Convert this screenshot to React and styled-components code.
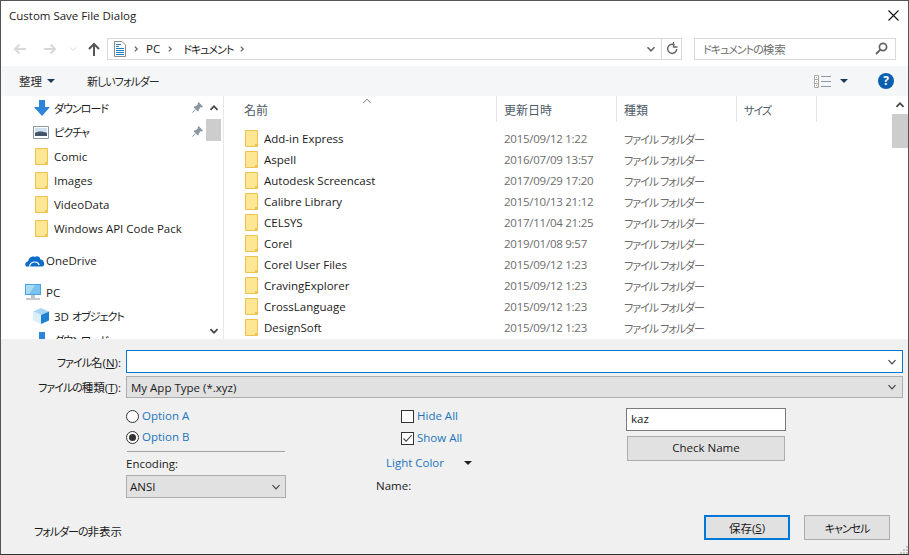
import React from "react";
import styled, { createGlobalStyle } from "styled-components";

const Global = createGlobalStyle`
  html, body { margin: 0; padding: 0; background: #fff; }
  body {
    font-family: "Open Sans", "Noto Sans CJK JP", sans-serif;
    font-size: 11.5px;
    font-feature-settings: "palt";
    color: #111;
  }
  * { box-sizing: border-box; }
`;

const Window = styled.div`
  width: 909px; height: 555px; display: flex; flex-direction: column;
  border: 1px solid #555; border-bottom-color: #333; background: #fff; overflow: hidden;
  position: relative;
`;
const Kana = styled.span`font-size: 11px; letter-spacing: -1px;`;
const TitleBar = styled.div`
  height: 30px; flex: none; display: flex; align-items: center; justify-content: space-between;
  padding: 0 9px 2px 8px; color: #1a1a1a;
`;
const NavBar = styled.div`
  height: 35px; flex: none; display: flex; align-items: center; padding: 0 0 0 12px;
`;
const NavIcon = styled.span`
  display: flex; align-items: center; justify-content: center; width: ${p => p.$w}px; flex: none;
`;
const AddressBox = styled.div`
  width: 575px; height: 22px; margin-left: 0; border: 1px solid #d9d9d9; display: flex; align-items: center;
  background: #fff; color: #222;
`;
const Crumb = styled.span`margin-left: ${p => p.$ml || 0}px; white-space: nowrap; display: flex; align-items: center;`;
const AddressFill = styled.span`flex: 1;`;
const AddressBtn = styled.span`
  width: 20px; height: 100%; border-left: ${p => p.$sep ? "1px solid #d9d9d9" : "none"};
  display: flex; align-items: center; justify-content: center; flex: none;
`;
const SearchBox = styled.div`
  width: 202px; height: 22px; margin-left: 12px; border: 1px solid #d9d9d9; display: flex;
  align-items: center; justify-content: space-between; padding: 0 7px 0 8px; color: #6d6d6d;
`;
const ToolBar = styled.div`
  height: 30px; flex: none; background: #f5f6f7; display: flex; align-items: center; padding: 0 14px 0 18px;
  color: #2b2b2b;
`;
const ToolSpacer = styled.span`flex: 1;`;
const Caret = styled.span`
  display: inline-block; width: 0; height: 0; border-left: 4px solid transparent; border-right: 4px solid transparent;
  border-top: 4px solid ${p => p.$c || "#1e3a57"}; margin-left: ${p => p.$ml || 0}px; flex: none;
`;
const ToolLabel = styled.span`margin-left: ${p => p.$ml || 0}px; white-space: nowrap;`;
const HelpSlot = styled.span`display: flex; width: 16px; margin-left: 30px; flex: none;`;
const Main = styled.div`height: 243px; flex: none; display: flex; overflow: hidden; background: #fff;`;
const NavPane = styled.div`width: 205px; flex: none; overflow: hidden;`;
const NavRow = styled.div`
  height: 24px; display: flex; align-items: center; padding-left: ${p => p.$indent}px;
  margin-top: ${p => p.$mt || 0}px; position: relative; color: #1c1c1c; white-space: nowrap;
`;
const NavIconSlot = styled.span`
  width: ${p => p.$w}px; flex: none; display: flex; align-items: center;
`;
const Pin = styled.span`position: absolute; left: 191px; top: 6px; display: flex;`;
const Scrollbar = styled.div`
  width: ${p => p.$w}px; flex: none; display: flex; flex-direction: column; background: #f8f8f8;
`;
const ScrollBtn = styled.div`
  height: ${p => p.$h}px; flex: none; display: flex; align-items: center; justify-content: center;
  background: #fff;
`;
const Thumb = styled.div`height: ${p => p.$h}px; background: #cdcdcd; flex: none;`;
const Track = styled.div`flex: 1; background: #fff;`;
const Divider = styled.div`width: 3px; flex: none; border-right: 1px solid #e8e8e8;`;
const FileList = styled.div`flex: 1; min-width: 0; overflow: hidden; position: relative;`;
const HeaderRow = styled.div`
  display: grid; grid-template-columns: 273px 120px 120px 80px; height: 26px; color: #4d5a68; font-size: 12px;
`;
const HeaderCell = styled.div`
  display: flex; align-items: center; padding-left: ${p => p.$pl}px; border-right: 1px solid #e3e3e3;
  padding-top: 1px;
`;
const SortMark = styled.span`position: absolute; left: 138px; top: 0; display: flex;`;
const Rows = styled.div`padding-top: 6px;`;
const FileRow = styled.div`
  display: grid; grid-template-columns: 273px 120px 120px; height: 21px; align-items: center; white-space: nowrap;
`;
const NameCell = styled.div`display: flex; align-items: center; padding-left: 21px; gap: 6px; color: #1a1a1a;`;
const MetaCell = styled.div`padding-left: 7px; color: #6d6d6d; letter-spacing: ${p => p.$tight ? "-0.25px" : "0"};`;

const Bottom = styled.div`flex: 1; background: #f0f0f0; position: relative; padding-top: 11px; min-height: 0;`;
const FormRow = styled.div`
  display: flex; align-items: center; height: ${p => p.$h}px; margin-top: ${p => p.$mt || 0}px;
  padding-right: 5px;
`;
const FormLabel = styled.div`
  width: 120px; flex: none; text-align: right; color: #1a1a1a; white-space: nowrap; margin-right: 5px;
`;
const Key = styled.span`text-decoration: underline;`;
const FileInput = styled.div`
  flex: 1; height: 100%; background: #fff; border: 1px solid #0078d7; display: flex; align-items: center;
  justify-content: flex-end; padding-right: 5px;
`;
const TypeSelect = styled.div`
  flex: 1; height: 100%; background: #e1e1e1; border: 1px solid #adadad; display: flex; align-items: center;
  justify-content: space-between; padding: 0 5px 0 4px; color: #1a1a1a;
`;
const Options = styled.div`
  display: grid; padding-left: 125px; margin-top: 8px; grid-template-columns: 250px 250px 160px;
`;
const Col = styled.div`display: flex; flex-direction: column; align-items: flex-start;`;
const OptionRow = styled.div`
  display: flex; align-items: center; height: ${p => p.$h}px; margin-top: ${p => p.$mt || 0}px;
  margin-left: ${p => p.$ml || 0}px; gap: ${p => p.$gap || 3}px; color: #1b75bc;
`;
const OptionText = styled.span`margin-top: -2px;`;
const Radio = styled.span`
  width: 13px; height: 13px; border: 1px solid #333; border-radius: 50%; background: #fff; flex: none;
  display: flex; align-items: center; justify-content: center;
  &::after { content: ""; display: ${p => p.$on ? "block" : "none"}; width: 7px; height: 7px; border-radius: 50%; background: #333; }
`;
const Check = styled.span`
  width: 13px; height: 13px; border: 1px solid #333; background: #fff; flex: none; display: flex;
  align-items: center; justify-content: center;
`;
const Rule = styled.div`width: 158px; height: 1px; background: #a0a0a0; margin: 3px 0 0 1px;`;
const PlainLabel = styled.div`
  height: ${p => p.$h}px; display: flex; align-items: center; margin-left: ${p => p.$ml || 0}px;
  margin-top: ${p => p.$mt || 0}px; color: #1a1a1a;
`;
const Select = styled.div`
  width: 160px; height: 23px; margin-top: 2px; background: #e1e1e1; border: 1px solid #adadad; display: flex;
  align-items: center; justify-content: space-between; padding: 0 4px 0 3px; color: #1a1a1a;
`;
const TextBox = styled.div`
  width: 160px; height: 23px; margin-top: 2px; background: #fff; border: 1px solid #7a7a7a; display: flex; align-items: center;
  padding: 0 0 2px 4px; color: #1a1a1a;
`;
const Button = styled.div`
  width: ${p => p.$w}px; height: ${p => p.$h}px; background: #e1e1e1; border: ${p => p.$primary ? "2px solid #0078d7" : "1px solid #adadad"};
  display: flex; align-items: center; justify-content: center; margin-top: ${p => p.$mt || 0}px; margin-left: ${p => p.$ml || 0}px;
  padding-bottom: ${p => p.$pb || 0}px; color: #1a1a1a; flex: none;
`;
const Footer = styled.div`
  display: flex; align-items: center; height: 25px; margin-top: 17px; padding: 0 18px 0 33px;
`;
const FooterText = styled.div`flex: 1; color: #1a1a1a; padding-top: 6px;`;
const Grip = styled.span`position: absolute; right: 0; bottom: 0; display: flex;`;

const Chev = ({ dir = "down", c = "#555", w = 1.6, size = 10 }) => (
  <svg width={size} height={size} viewBox="0 0 10 10" fill="none">
    <path d={dir === "down" ? "M1.5 3.2 5 6.8 8.5 3.2" : dir === "up" ? "M1.5 6.8 5 3.2 8.5 6.8" : "M3.5 2 6.5 5 3.5 8"} stroke={c} strokeWidth={w} />
  </svg>
);
const Folder = () => (
  <svg width="13" height="17" viewBox="0 0 13 17">
    <path d="M.5.5H12.5V16.5H.5Z" fill="#fde795" stroke="#eec24f" />
    <path d="M10 14h2v2h-2z" fill="#eec24f" />
  </svg>
);
const Arrow = ({ flip, c }) => (
  <svg width="14" height="12" viewBox="0 0 14 12" fill="none" style={{ transform: flip ? "scaleX(-1)" : "none" }}>
    <path d="M13 6H2M6.5 1.5 2 6l4.5 4.5" stroke={c} strokeWidth="2" />
  </svg>
);
const UpArrow = () => (
  <svg width="12" height="14" viewBox="0 0 12 14" fill="none">
    <path d="M6 14V2M1 7l5-5 5 5" stroke="#555" strokeWidth="2" />
  </svg>
);
const DocIcon = () => (
  <svg width="12" height="16" viewBox="0 0 12 16">
    <path d="M.5.5H8L11.5 4V15.5H.5Z" fill="#fff" stroke="#8a8a8a" />
    <path d="M2 3.5h5M2 5.5h3M2 7.5h8M2 9.5h8M2 11.5h8M2 13.5h8" stroke="#1f7fc4" />
  </svg>
);
const Refresh = () => (
  <svg width="12" height="13" viewBox="0 0 12 13" fill="none">
    <path d="M8.5 2.8A4.6 4.6 0 1 0 10.8 7" stroke="#666" strokeWidth="1.5" />
    <path d="M6.5 0v5.5h4" stroke="#666" strokeWidth="1.3" transform="translate(1 -.5)" />
  </svg>
);
const SearchIcon = () => (
  <svg width="13" height="13" viewBox="0 0 13 13" fill="none">
    <circle cx="8" cy="5" r="3.6" stroke="#666" strokeWidth="1.7" />
    <path d="M5.4 7.6 1 12" stroke="#666" strokeWidth="2" />
  </svg>
);
const ViewIcon = () => (
  <svg width="17" height="13" viewBox="0 0 17 13">
    <path d="M.5.5h4v12h-4z" fill="#fff" stroke="#a8a8a8" />
    <path d="M1 4.5h3M1 8.5h3" stroke="#a8a8a8" />
    <path d="M2 2h1v1H2zM2 6h1v1H2zM2 10h1v1H2z" fill="#d9a441" />
    <path d="M7 1.5h10M7 6.5h10M7 11.5h10" stroke="#8c9aa8" />
  </svg>
);
const Help = () => (
  <svg width="16" height="16" viewBox="0 0 16 16">
    <circle cx="8" cy="8" r="8" fill="#0a5fb0" />
    <text x="8" y="12.2" fontSize="12" fontWeight="700" fontFamily="Open Sans" fill="#fff" textAnchor="middle">?</text>
  </svg>
);
const CloseX = () => (
  <svg width="11" height="11" viewBox="0 0 11 11"><path d="M.5.5l10 10M10.5.5l-10 10" stroke="#111" strokeWidth="1.1" /></svg>
);
const PinIcon = () => (
  <svg width="11" height="11" viewBox="0 0 11 11">
    <path d="M6.5 0 11 4.5 9.8 5.4 8.8 5 6.8 7.6 6.8 9 5.8 9.6 1.6 5.2 2.4 4.2 3.8 4.2 6 2.2 5.6 1.2Z" fill="#8d979f" />
    <path d="M3.2 7.6.3 10.7" stroke="#8d979f" />
  </svg>
);
const DownloadIcon = () => (
  <svg width="16" height="16" viewBox="0 0 16 16"><path d="M5 0h6v7h5l-8 9-8-9h5z" fill="#2d84d8" /></svg>
);
const PictureIcon = () => (
  <svg width="16" height="13" viewBox="0 0 16 13">
    <path d="M.5.5h15v12H.5z" fill="#fff" stroke="#8d96a0" />
    <path d="M2 2h12v8H2z" fill="#cfe0ee" />
    <path d="M2 7c3-2 7-2 12 0v3H2z" fill="#44556b" />
  </svg>
);
const Cloud = () => (
  <svg width="20" height="13" viewBox="0 0 20 13">
    <path d="M1 12.5C-.5 10.5.3 8 3 7.6 3.5 4 7 1.6 10 3c2-1.5 5-.3 5.5 2.4 2.5 0 4.3 3 3.6 5.4-.3 1-1 1.7-2 1.7Z" fill="#0f6cc8" />
    <path d="M4.5 12.6C5 9.8 7 8 9.8 8c2.4 0 4 1.5 4.5 3" fill="none" stroke="#fff" strokeWidth="1.2" />
  </svg>
);
const Monitor = () => (
  <svg width="16" height="16" viewBox="0 0 16 16">
    <path d="M0 0h16v11H0z" fill="#4aa3e0" />
    <path d="M1 1h14v9H1z" fill="#7cc4ef" />
    <path d="M1 1h9L4 10H1z" fill="#a9dcf7" />
    <path d="M6 11h4v3H6z" fill="#b9c4cc" />
    <path d="M1 14.5h14v1H1z" fill="#8a949b" />
  </svg>
);
const Cube = () => (
  <svg width="16" height="16" viewBox="0 0 16 16">
    <path d="M8 0 16 3.5 8 7 0 3.5Z" fill="#a9d6f5" />
    <path d="M0 3.5 8 7V16L0 12.5Z" fill="#dbeefb" />
    <path d="M16 3.5 8 7V16L16 12.5Z" fill="#1f7fd1" />
  </svg>
);
const SmallDown = () => (
  <svg width="10" height="16" viewBox="0 0 10 16"><path d="M2 0h6v8h2L5 16 0 8h2z" fill="#2d84d8" /></svg>
);
const Tick = () => (
  <svg width="11" height="11" viewBox="0 0 11 11" fill="none"><path d="M1.5 5.5 4.2 8.2 9.8 2" stroke="#444" strokeWidth="1.1" /></svg>
);
const GripIcon = () => (
  <svg width="9" height="9" viewBox="0 0 9 9">
    <path d="M7 1h2v2H7zM4 4h2v2H4zM7 4h2v2H7zM1 7h2v2H1zM4 7h2v2H4zM7 7h2v2H7z" fill="#c4c4c4" />
  </svg>
);

const files = [
  ["Add-in Express", "2015/09/12 1:22"],
  ["Aspell", "2016/07/09 13:57"],
  ["Autodesk Screencast", "2017/09/29 17:20"],
  ["Calibre Library", "2015/10/13 21:12"],
  ["CELSYS", "2017/11/04 21:25"],
  ["Corel", "2019/01/08 9:57"],
  ["Corel User Files", "2015/09/12 1:23"],
  ["CravingExplorer", "2015/09/12 1:23"],
  ["CrossLanguage", "2015/09/12 1:23"],
  ["DesignSoft", "2015/09/12 1:23"],
];

export default function App() {
  return (
    <>
      <Global />
      <Window>
        <TitleBar>
          <span>Custom Save File Dialog</span>
          <CloseX />
        </TitleBar>
        <NavBar>
          <NavIcon $w={14}><Arrow c="#d8d8d8" /></NavIcon>
          <NavIcon $w={16} />
          <NavIcon $w={14}><Arrow flip c="#d8d8d8" /></NavIcon>
          <NavIcon $w={11} />
          <NavIcon $w={10}><Chev c="#d8d8d8" w={1.2} size={8} /></NavIcon>
          <NavIcon $w={8} />
          <NavIcon $w={16}><UpArrow /></NavIcon>
          <NavIcon $w={5} />
          <AddressBox>
            <NavIcon $w={24}><DocIcon /></NavIcon>
            <Chev dir="right" c="#666" size={8} />
            <Crumb $ml={6}>PC</Crumb>
            <Crumb $ml={6}><Chev dir="right" c="#666" size={8} /></Crumb>
            <Crumb $ml={9}><Kana>ドキュメント</Kana></Crumb>
            <Crumb $ml={5}><Chev dir="right" c="#666" size={8} /></Crumb>
            <AddressFill />
            <AddressBtn><Chev c="#666" /></AddressBtn>
            <AddressBtn $sep><Refresh /></AddressBtn>
          </AddressBox>
          <SearchBox>
            <span><Kana>ドキュメントの</Kana>検索</span>
            <SearchIcon />
          </SearchBox>
        </NavBar>
        <ToolBar>
          <span>整理</span>
          <Caret $ml={5} />
          <ToolLabel $ml={32}><Kana>新しいフォルダー</Kana></ToolLabel>
          <ToolSpacer />
          <ViewIcon />
          <Caret $ml={9} />
          <HelpSlot><Help /></HelpSlot>
        </ToolBar>
        <Main>
          <NavPane>
            <NavRow $indent={33}><NavIconSlot $w={20}><DownloadIcon /></NavIconSlot><Kana>ダウンロード</Kana><Pin><PinIcon /></Pin></NavRow>
            <NavRow $indent={32}><NavIconSlot $w={21}><PictureIcon /></NavIconSlot><Kana>ピクチャ</Kana><Pin><PinIcon /></Pin></NavRow>
            <NavRow $indent={34}><NavIconSlot $w={19}><Folder /></NavIconSlot>Comic</NavRow>
            <NavRow $indent={34}><NavIconSlot $w={19}><Folder /></NavIconSlot>Images</NavRow>
            <NavRow $indent={34}><NavIconSlot $w={19}><Folder /></NavIconSlot>VideoData</NavRow>
            <NavRow $indent={34}><NavIconSlot $w={19}><Folder /></NavIconSlot>Windows API Code Pack</NavRow>
            <NavRow $indent={24} $mt={8}><NavIconSlot $w={21}><Cloud /></NavIconSlot>OneDrive</NavRow>
            <NavRow $indent={24} $mt={8}><NavIconSlot $w={21}><Monitor /></NavIconSlot>PC</NavRow>
            <NavRow $indent={32}><NavIconSlot $w={21}><Cube /></NavIconSlot>3D&nbsp;<Kana>オブジェクト</Kana></NavRow>
            <NavRow $indent={36}><NavIconSlot $w={17}><SmallDown /></NavIconSlot><Kana>ダウンロード</Kana></NavRow>
          </NavPane>
          <Scrollbar $w={15}>
            <ScrollBtn $h={23}><Chev dir="up" c="#444" w={1.8} /></ScrollBtn>
            <Thumb $h={22} />
            <Track />
            <ScrollBtn $h={16}><Chev c="#444" w={1.8} /></ScrollBtn>
          </Scrollbar>
          <Divider />
          <FileList>
            <SortMark><Chev dir="up" c="#777" w={1} /></SortMark>
            <HeaderRow>
              <HeaderCell $pl={20}>名前</HeaderCell>
              <HeaderCell $pl={7}>更新日時</HeaderCell>
              <HeaderCell $pl={7}>種類</HeaderCell>
              <HeaderCell $pl={7}><Kana>サイズ</Kana></HeaderCell>
            </HeaderRow>
            <Rows>
              {files.map(([name, date]) => (
                <FileRow key={name}>
                  <NameCell><Folder />{name}</NameCell>
                  <MetaCell $tight>{date}</MetaCell>
                  <MetaCell><Kana>ファイル フォルダー</Kana></MetaCell>
                </FileRow>
              ))}
            </Rows>
          </FileList>
          <Scrollbar $w={16}>
            <ScrollBtn $h={18}><Chev dir="up" c="#444" w={1.8} /></ScrollBtn>
            <Thumb $h={34} />
            <Track />
          </Scrollbar>
        </Main>
        <Bottom>
          <FormRow $h={23}>
            <FormLabel><Kana>ファイル</Kana>名(<Key>N</Key>):</FormLabel>
            <FileInput><Chev c="#444" w={1.2} /></FileInput>
          </FormRow>
          <FormRow $h={22} $mt={3}>
            <FormLabel><Kana>ファイルの</Kana>種類(<Key>T</Key>):</FormLabel>
            <TypeSelect>My App Type (*.xyz)<Chev c="#444" w={1.2} /></TypeSelect>
          </FormRow>
          <Options>
            <Col>
              <OptionRow $h={21}><Radio /><OptionText>Option A</OptionText></OptionRow>
              <OptionRow $h={21}><Radio $on /><OptionText>Option B</OptionText></OptionRow>
              <Rule />
              <PlainLabel $h={20} $mt={1}>Encoding:</PlainLabel>
              <Select>ANSI<Chev c="#444" w={1.2} /></Select>
            </Col>
            <Col>
              <OptionRow $h={21} $ml={25}><Check /><OptionText>Hide All</OptionText></OptionRow>
              <OptionRow $h={22} $ml={25}><Check><Tick /></Check><OptionText>Show All</OptionText></OptionRow>
              <OptionRow $h={20} $mt={4} $ml={10} $gap={20}><OptionText>Light Color</OptionText><Caret $c="#222" /></OptionRow>
              <PlainLabel $h={20} $mt={2}>Name:</PlainLabel>
            </Col>
            <Col>
              <TextBox>kaz</TextBox>
              <Button $w={158} $h={25} $mt={5} $ml={1} $pb={2}>Check Name</Button>
            </Col>
          </Options>
          <Footer>
            <FooterText><Kana>フォルダーの</Kana>非表示</FooterText>
            <Button $w={86} $h={25} $primary>保存(<Key>S</Key>)</Button>
            <Button $w={86} $h={25} $ml={14}><Kana>キャンセル</Kana></Button>
          </Footer>
          <Grip><GripIcon /></Grip>
        </Bottom>
      </Window>
    </>
  );
}
